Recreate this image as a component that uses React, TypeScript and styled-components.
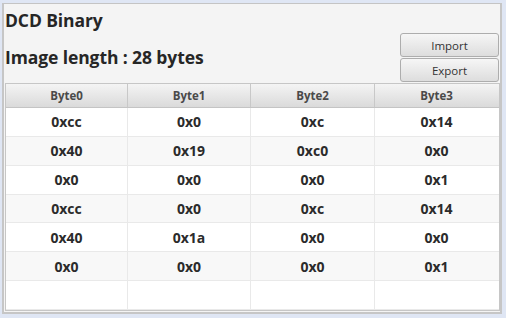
import React from "react";
import styled, { createGlobalStyle } from "styled-components";

const Global = createGlobalStyle`
  html, body { margin: 0; padding: 0; }
  body {
    background: #dfe6f4;
    font-family: "Open Sans", "Noto Sans", sans-serif;
    width: 506px;
    height: 318px;
    overflow: hidden;
  }
`;

const Panel = styled.div`
  box-sizing: border-box;
  margin: 3px 0 0 2px;
  width: 500px;
  height: 311px;
  background: #f4f4f4;
  border-top: 1px solid #c4c4c4;
  border-left: 2px solid #c6c6c6;
  border-right: 2px solid #c6c6c6;
  border-bottom: 2px solid #c6c6c6;
  display: flex;
  flex-direction: column;
  padding: 0 0 0 1px;
`;

const Header = styled.div`
  height: 78px;
  display: flex;
  justify-content: space-between;
  align-items: flex-end;
  padding: 0 1px 1px 0;
`;

const TitleBlock = styled.div`
  align-self: stretch;
  display: flex;
  flex-direction: column;
  color: #262626;
  font-weight: 700;
  font-size: 17.5px;
  letter-spacing: -0.1px;
`;

const Title = styled.div`
  line-height: 22px;
  margin-top: 5px;
`;

const Subtitle = styled.div`
  line-height: 22px;
  margin-top: 15px;
`;

const Buttons = styled.div`
  display: flex;
  flex-direction: column;
  gap: 1px;
`;

const Button = styled.button`
  box-sizing: border-box;
  width: 99px;
  height: 24px;
  border: 1px solid #adadad;
  border-radius: 3px;
  background: linear-gradient(#f6f6f6, #dddddd);
  font-family: "Open Sans", "Noto Sans", sans-serif;
  font-size: 11.5px;
  color: #333;
  padding: 0;
  cursor: pointer;
`;

const Table = styled.div`
  box-sizing: border-box;
  width: 495px;
  height: 228px;
  background: #fff;
  border: 1px solid #c6c6c6;
  display: flex;
  flex-direction: column;
  overflow: hidden;
`;

const HeadRow = styled.div`
  display: grid;
  grid-template-columns: 122px 123px 124px 123px;
  height: 23px;
  background: linear-gradient(#f4f4f4, #dadada);
  border-bottom: 1px solid #c4c4c4;
`;

const HeadCell = styled.div<{ $last?: boolean }>`
  display: flex;
  align-items: center;
  justify-content: center;
  font-size: 11.5px;
  font-weight: 700;
  color: #4a4a4a;
  border-right: ${(p) => (p.$last ? "none" : "1px solid #c8c8c8")};
`;

const Row = styled.div<{ $alt?: boolean }>`
  display: grid;
  grid-template-columns: 122px 123px 124px 123px;
  height: 29px;
  box-sizing: border-box;
  background: ${(p) => (p.$alt ? "#f8f8f8" : "#ffffff")};
  border-bottom: 1px solid #e9e9e9;
`;

const Cell = styled.div<{ $last?: boolean }>`
  display: flex;
  align-items: center;
  justify-content: center;
  font-size: 14px;
  font-weight: 700;
  color: #2b2b2b;
  border-right: ${(p) => (p.$last ? "none" : "1px solid #e9e9e9")};
`;

const data: string[][] = [
  ["0xcc", "0x0", "0xc", "0x14"],
  ["0x40", "0x19", "0xc0", "0x0"],
  ["0x0", "0x0", "0x0", "0x1"],
  ["0xcc", "0x0", "0xc", "0x14"],
  ["0x40", "0x1a", "0x0", "0x0"],
  ["0x0", "0x0", "0x0", "0x1"],
  ["", "", "", ""],
];

export default function App() {
  return (
    <>
      <Global />
      <Panel>
        <Header>
          <TitleBlock>
            <Title>DCD Binary</Title>
            <Subtitle>Image length : 28 bytes</Subtitle>
          </TitleBlock>
          <Buttons>
            <Button>Import</Button>
            <Button>Export</Button>
          </Buttons>
        </Header>
        <Table>
          <HeadRow>
            {["Byte0", "Byte1", "Byte2", "Byte3"].map((h, i) => (
              <HeadCell key={h} $last={i === 3}>
                {h}
              </HeadCell>
            ))}
          </HeadRow>
          {data.map((r, ri) => (
            <Row key={ri} $alt={ri % 2 === 1}>
              {r.map((c, ci) => (
                <Cell key={ci} $last={ci === 3}>
                  {c}
                </Cell>
              ))}
            </Row>
          ))}
        </Table>
      </Panel>
    </>
  );
}
